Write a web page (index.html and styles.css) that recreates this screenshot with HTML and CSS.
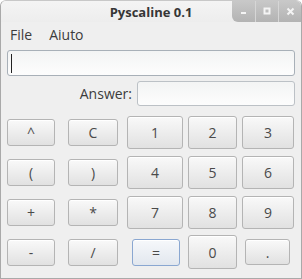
FILE: index.html
```html
<!DOCTYPE html>
<html lang="it">
<head>
    <meta charset="UTF-8">
    <title>Pyscaline 0.1</title>
    <link rel="stylesheet" href="styles.css">
</head>
<body>

    <div class="window">
        <!-- Title bar -->
        <div class="titlebar">
            <span class="title">Pyscaline 0.1</span>
            <div class="controls">
                <span class="ctl">
                    <svg width="8" height="8" viewBox="0 0 8 8"><rect x="1" y="5" width="5" height="2" fill="#f4f4f4"/></svg>
                </span>
                <span class="ctl">
                    <svg width="8" height="8" viewBox="0 0 8 8"><rect x="1.5" y="1.5" width="5" height="5" fill="none" stroke="#f4f4f4" stroke-width="2"/></svg>
                </span>
                <span class="ctl">
                    <svg width="9" height="9" viewBox="0 0 9 9"><path d="M1.5 1.5 L7.5 7.5 M7.5 1.5 L1.5 7.5" stroke="#f4f4f4" stroke-width="2"/></svg>
                </span>
            </div>
        </div>

        <!-- Menu -->
        <nav class="menubar">
            <span class="menu-item">File</span>
            <span class="menu-item">Aiuto</span>
        </nav>

        <div class="main">
            <div class="field expr"><span class="caret"></span></div>

            <div class="answer-row">
                <span class="answer-label">Answer:</span>
                <div class="field answer"></div>
            </div>

            <div class="pads">
                <div class="pad ops">
                    <button class="btn small">^</button>
                    <button class="btn small">C</button>
                    <button class="btn small">(</button>
                    <button class="btn small">)</button>
                    <button class="btn small">+</button>
                    <button class="btn small">*</button>
                    <button class="btn small">-</button>
                    <button class="btn small">/</button>
                </div>
                <div class="pad digits">
                    <button class="btn big">1</button>
                    <button class="btn big">2</button>
                    <button class="btn big">3</button>
                    <button class="btn big">4</button>
                    <button class="btn big">5</button>
                    <button class="btn big">6</button>
                    <button class="btn big">7</button>
                    <button class="btn big">8</button>
                    <button class="btn big">9</button>
                    <button class="btn small equals">=</button>
                    <button class="btn big zero">0</button>
                    <button class="btn small dot">.</button>
                </div>
            </div>
        </div>
    </div>

</body>
</html>
```

FILE: styles.css
```css
body {
    margin: 0;
    background: #ffffff;
    font-family: "Open Sans", "DejaVu Sans", sans-serif;
}

.window {
    width: 302px;
    height: 279px;
    box-sizing: border-box;
    border: 1px solid #a9a9a9;
    border-top-color: #c8c8c8;
    border-radius: 6px 6px 0 0;
    background: #efefef;
    overflow: hidden;
}

/* Title bar */
.titlebar {
    height: 21px;
    position: relative;
    display: flex;
    justify-content: center;
    align-items: center;
    background: linear-gradient(#f4f4f4, #ededed);
}

.title {
    font-weight: bold;
    font-size: 13px;
    color: #363636;
    margin-top: 1px;
}

.controls {
    position: absolute;
    top: -1px;
    right: 0;
    height: 22px;
    display: flex;
    border-bottom-left-radius: 6px;
    overflow: hidden;
    background: linear-gradient(#c9c9c9, #b3b3b3);
}

.ctl {
    width: 22px;
    display: flex;
    justify-content: center;
    align-items: center;
    border-left: 1px solid #d6d6d6;
}

.ctl:first-child {
    width: 23px;
    border-left: none;
}

/* Menu */
.menubar {
    height: 25px;
    display: flex;
    align-items: center;
    padding-left: 9px;
}

.menu-item {
    font-size: 14px;
    color: #3c3c3c;
    margin-right: 17px;
}

.main {
    padding: 3px 6px 0;
}

.field {
    box-sizing: border-box;
    height: 26px;
    border: 1px solid #a8b0b8;
    border-radius: 3px;
    background: linear-gradient(#f3f4f4, #fdfdfd);
}

.expr {
    display: flex;
    align-items: center;
    padding-left: 3px;
}

.caret {
    width: 1px;
    height: 19px;
    background: #222;
}

.answer-row {
    display: flex;
    align-items: center;
    justify-content: flex-end;
    gap: 5px;
    margin-top: 5px;
}

.answer-label {
    font-size: 14px;
    color: #3c3c3c;
}

.answer {
    width: 158px;
    height: 25px;
    border-color: #bcc1c6;
}

/* Button pads */
.pads {
    display: flex;
    gap: 9px;
    margin-top: 6px;
}

.pad {
    display: grid;
    grid-auto-rows: 40px;
}

.ops {
    grid-template-columns: 48px 50px;
    column-gap: 13px;
}

.digits {
    grid-template-columns: 56px 49px 52px;
    column-gap: 5px;
}

.btn {
    font-family: "Open Sans", "DejaVu Sans", sans-serif;
    font-size: 14px;
    color: #4a4a4a;
    padding: 0;
    border: 1px solid #b4b4b4;
    border-radius: 3px;
    background: linear-gradient(#f9f9f9, #e1e1e1);
    box-shadow: inset 0 1px 0 #ffffff;
    align-self: start;
    width: 100%;
}

.btn.small {
    height: 27px;
    margin-top: 7px;
}

.btn.big {
    height: 33px;
    margin-top: 4px;
}

.btn.equals {
    width: 48px;
    margin-left: 5px;
    border-color: #8aa7d1;
    background: linear-gradient(#f6f8fb, #e2e7ee);
}

.btn.zero {
    height: 34px;
    margin-top: 3px;
}

.btn.dot {
    height: 26px;
    width: 45px;
    margin-left: 3px;
}
```
